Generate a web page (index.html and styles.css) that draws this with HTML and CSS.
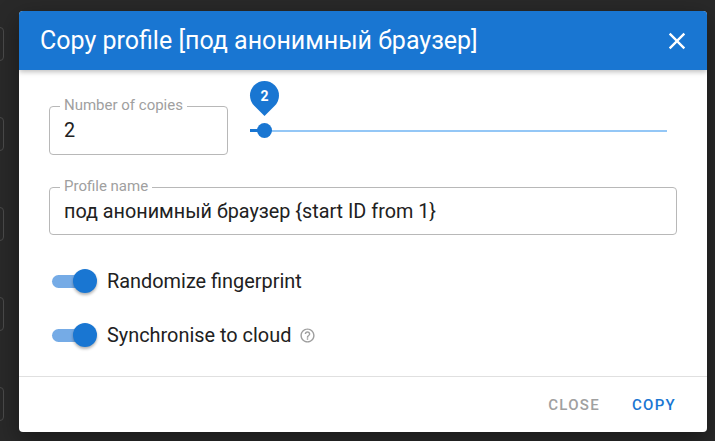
FILE: index.html
```html
<!DOCTYPE html>
<html lang="en">
<head>
    <meta charset="UTF-8">
    <meta name="viewport" content="width=device-width, initial-scale=1.0">
    <title>Copy profile</title>
    <link rel="stylesheet" href="styles.css">
</head>
<body>
    <!-- profile list behind the modal -->
    <div class="page">
        <div class="ghost-list">
            <div class="ghost"></div>
            <div class="ghost"></div>
            <div class="ghost"></div>
            <div class="ghost"></div>
            <div class="ghost"></div>
        </div>
    </div>

    <div class="overlay">
        <div class="dialog">
            <header class="dialog-title">
                <h2>Copy profile [под анонимный браузер]</h2>
                <button class="icon-btn" aria-label="close">
                    <svg viewBox="0 0 24 24" width="28" height="28">
                        <path fill="currentColor" d="M19 6.41L17.59 5 12 10.59 6.41 5 5 6.41 10.59 12 5 17.59 6.41 19 12 13.41 17.59 19 19 17.59 13.41 12z"/>
                    </svg>
                </button>
            </header>

            <div class="dialog-content">
                <div class="copies-row">
                    <div class="field field-count">
                        <span class="field-label">Number of copies</span>
                        <span class="field-value">2</span>
                    </div>
                    <div class="slider">
                        <div class="slider-rail"></div>
                        <div class="slider-track" style="width: 14px"></div>
                        <div class="slider-thumb" style="left: 14px">
                            <span class="slider-pin"><span>2</span></span>
                        </div>
                    </div>
                </div>

                <div class="field field-name">
                    <span class="field-label">Profile name</span>
                    <span class="field-value">под анонимный браузер {start ID from 1}</span>
                </div>

                <label class="switch-row">
                    <span class="switch"><span class="switch-thumb"></span></span>
                    <span class="switch-text">Randomize fingerprint</span>
                </label>
                <label class="switch-row">
                    <span class="switch"><span class="switch-thumb"></span></span>
                    <span class="switch-text">Synchronise to cloud</span>
                    <svg class="help-icon" viewBox="0 0 24 24" width="17" height="17">
                        <path fill="currentColor" d="M11 18h2v-2h-2v2zm1-16C6.48 2 2 6.48 2 12s4.48 10 10 10 10-4.48 10-10S17.520 2 12 2zm0 18c-4.41 0-8-3.590-8-8s3.590-8 8-8 8 3.590 8 8-3.590 8-8 8zm0-14c-2.21 0-4 1.79-4 4h2c0-1.1.9-2 2-2s2 .9 2 2c0 2-3 1.75-3 5h2c0-2.25 3-2.5 3-5 0-2.21-1.79-4-4-4z"/>
                    </svg>
                </label>
            </div>

            <div class="dialog-actions">
                <button class="btn btn-close">Close</button>
                <button class="btn btn-copy">Copy</button>
            </div>
        </div>
    </div>
</body>
</html>
```

FILE: styles.css
```css
* {
    box-sizing: border-box;
}

body {
    margin: 0;
    width: 715px;
    height: 441px;
    overflow: hidden;
    background-color: #292929;
    font-family: Roboto, "Noto Sans", Arial, sans-serif;
    position: relative;
}

/* faded list behind the dialog */
.page {
    height: 100%;
}

.ghost-list {
    display: flex;
    flex-direction: column;
    gap: 56px;
    padding-top: 27px;
    margin-left: -30px;
}

.ghost {
    width: 34px;
    height: 34px;
    border: 1px solid #4a4a4a;
    border-radius: 4px;
}

.overlay {
    position: absolute;
    inset: 0;
    padding: 11px 8px 9px 19px;
}

.dialog {
    height: 100%;
    background-color: #fff;
    border-radius: 4px;
    overflow: hidden;
    display: flex;
    flex-direction: column;
    box-shadow: 0 8px 24px rgba(0, 0, 0, 0.4);
}

/* Title bar */
.dialog-title {
    height: 59px;
    flex-shrink: 0;
    display: flex;
    align-items: center;
    justify-content: space-between;
    padding: 0 16px 0 21px;
    background-color: #1976d2;
    color: #fff;
    box-shadow: 0 2px 5px rgba(0, 0, 0, 0.25);
    position: relative;
    z-index: 1;
}

.dialog-title h2 {
    margin: 0;
    font-size: 25px;
    font-weight: 400;
}

.icon-btn {
    border: none;
    background: none;
    color: #fff;
    padding: 0;
    display: flex;
}

.dialog-content {
    flex: 1;
    padding: 36px 30px 0;
}

.copies-row {
    display: flex;
    align-items: center;
}

/* Outlined text fields */
.field {
    position: relative;
    height: 49px;
    border: 1px solid #b8b8b8;
    border-radius: 4px;
    display: flex;
    align-items: center;
    padding: 0 14px;
}

.field-count {
    width: 179px;
    flex-shrink: 0;
}

.field-name {
    margin-top: 32px;
    height: 48px;
}

.field-label {
    position: absolute;
    top: -10px;
    left: 10px;
    padding: 0 4px;
    background-color: #fff;
    color: #a0a0a0;
    font-size: 15px;
    line-height: 17px;
}

.field-value {
    color: #212121;
    font-size: 19.8px;
}

/* Slider */
.slider {
    position: relative;
    flex: 1;
    height: 16px;
    margin: 0 10px 0 22px;
}

.slider-rail {
    position: absolute;
    left: 0;
    right: 0;
    top: 7px;
    height: 2px;
    background-color: #94c7f6;
}

.slider-track {
    position: absolute;
    left: 0;
    top: 6.5px;
    height: 3px;
    background-color: #1976d2;
}

.slider-thumb {
    position: absolute;
    top: 0.5px;
    width: 15px;
    height: 15px;
    margin-left: -7.5px;
    border-radius: 50%;
    background-color: #1976d2;
}

.slider-pin {
    position: absolute;
    left: -7px;
    top: -42px;
    width: 29px;
    height: 29px;
    border-radius: 50% 50% 50% 0;
    background-color: #1976d2;
    transform: rotate(-45deg);
    display: flex;
    align-items: center;
    justify-content: center;
}

.slider-pin span {
    transform: rotate(45deg);
    color: #fff;
    font-size: 14px;
    font-weight: 700;
}

/* Switches */
.switch-row {
    display: flex;
    align-items: center;
    height: 54px;
    padding-left: 3px;
}

.switch-row:first-of-type {
    margin-top: 19px;
}

.switch {
    position: relative;
    width: 40px;
    height: 13px;
    border-radius: 7px;
    background-color: #75abe6;
    margin-right: 15px;
}

.switch-thumb {
    position: absolute;
    right: -5px;
    top: -5.5px;
    width: 24px;
    height: 24px;
    border-radius: 50%;
    background-color: #1976d2;
    box-shadow: 0 2px 3px rgba(0, 0, 0, 0.3);
}

.switch-text {
    font-size: 19.9px;
    color: #212121;
}

.help-icon {
    color: #9e9e9e;
    margin-left: 8px;
}

/* Footer buttons */
.dialog-actions {
    height: 56px;
    flex-shrink: 0;
    border-top: 1px solid #e0e0e0;
    display: flex;
    align-items: center;
    justify-content: flex-end;
    gap: 12px;
    padding: 0 21px 0 0;
}

.btn {
    border: none;
    background: none;
    padding: 8px 10px;
    font-family: inherit;
    font-size: 15px;
    font-weight: 500;
    letter-spacing: 1.3px;
    text-transform: uppercase;
}

.btn-close {
    color: #a0a0a0;
}

.btn-copy {
    color: #1976d2;
}
```
